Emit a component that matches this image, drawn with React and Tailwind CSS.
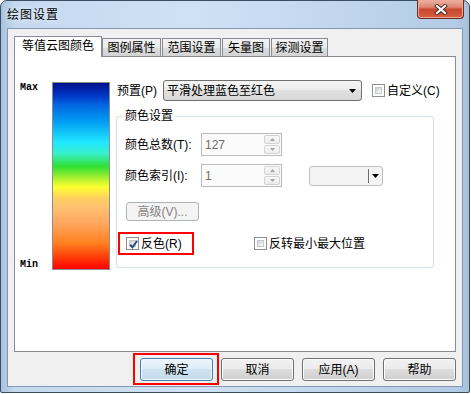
import React from "react";

const FONT = "font-['Liberation_Sans','Noto_Sans_CJK_SC',sans-serif]";
const BTN =
  "flex h-[23px] w-[73px] items-center justify-center rounded-[3px] border border-[#707070] bg-[linear-gradient(#f2f2f2,#ebebeb_50%,#dddddd_50%,#cfcfcf)] shadow-[inset_0_0_0_1px_#fbfbfb] text-[12px] text-black";

function Check({ checked }) {
  return (
    <span className="flex h-[13px] w-[13px] shrink-0 border border-[#8e8f8f] bg-white p-[2px]">
      <span className="relative flex h-full w-full items-center justify-center border border-[#c4c7cc] bg-[linear-gradient(135deg,#c9cdd2,#eef0f2_70%,#fafafa)]">
        {checked ? (
          <svg width="11" height="11" viewBox="0 0 11 11" className="absolute -left-[2px] -top-[2px]">
            <path d="M2.2 5.6 L4.4 8.4 L9.2 1.8" fill="none" stroke="#2c4a80" strokeWidth="1.9" />
          </svg>
        ) : null}
      </span>
    </span>
  );
}

function Spin({ value }) {
  return (
    <div className="flex h-[23px] w-[81px] items-center justify-between border border-[#b9bcbf] bg-[#fbfbfb] pl-[3px] pr-[1px]">
      <span className="text-[12px] text-[#6d6d6d]">{value}</span>
      <div className="flex flex-col gap-[1px]">
        {["up", "down"].map((d) => (
          <span
            key={d}
            className="flex h-[9px] w-[16px] items-center justify-center rounded-[2px] border border-[#d4d4d4] bg-[linear-gradient(#f8f8f8,#ececec)]"
          >
            <svg width="5" height="3" viewBox="0 0 5 3">
              <path d={d === "up" ? "M0 3 L2.5 0 L5 3 Z" : "M0 0 L2.5 3 L5 0 Z"} fill="#a3a3a3" />
            </svg>
          </span>
        ))}
      </div>
    </div>
  );
}

function Arrow() {
  return (
    <svg width="7" height="4" viewBox="0 0 7 4">
      <path d="M0 0 L7 0 L3.5 4 Z" fill="#000" />
    </svg>
  );
}

export default function App() {
  const tabs = [
    { t: "图例属性", w: "w-[59px]" },
    { t: "范围设置", w: "w-[59px]" },
    { t: "矢量图", w: "w-[48px]" },
    { t: "探测设置", w: "w-[57px]" },
  ];

  return (
    <div className={`h-[394px] w-[471px] bg-white ${FONT}`}>
      <div className="flex h-[393px] w-[470px] flex-col rounded-t-[7px] rounded-b-[2px] border border-[#3b4d62] bg-[linear-gradient(90deg,#a9c2de,#c4d8ee_3%,#cfe1f4_40%,#c2d7ee_70%,#b3cbe6_97%,#a7c0dc)]">
        {/* title bar */}
        <div className="flex h-[27px] shrink-0 items-start justify-between pl-[6px] pr-[5px]">
          <span className="self-center text-[12px] leading-[14px] tracking-[1px] text-black [text-shadow:0_0_6px_#ffffff]">
            绘图设置
          </span>
          <button className="-mt-[1px] flex h-[19px] w-[47px] items-center justify-center rounded-b-[4px] border border-t-0 border-[#6b2a20] bg-[linear-gradient(#ecb3a5,#de8470_40%,#c9472c_52%,#d4603f)] shadow-[inset_0_0_0_1px_#f0a898]">
            <svg width="14" height="11" viewBox="0 0 14 11">
              <path d="M3 2 L11 9 M11 2 L3 9" stroke="#4a2a26" strokeWidth="4" strokeLinecap="square" />
              <path d="M3 2 L11 9 M11 2 L3 9" stroke="#ffffff" strokeWidth="2.2" strokeLinecap="square" />
            </svg>
          </button>
        </div>

        {/* client */}
        <div className="flex px-[6px]">
          <div className="flex h-[359px] w-[456px] flex-col border border-[#8397ae] bg-[#f0f0f0] pl-[6px] pr-[6px] pt-[7px]">
            {/* tabs */}
            <div className="relative z-10 flex h-[20px] items-end">
              <div className="-mb-[1px] flex h-[21px] w-[88px] items-center justify-center border border-b-0 border-[#898c95] bg-white pb-[2px] text-[12px] text-black">
                等值云图颜色
              </div>
              {tabs.map((tab, i) => (
                <div
                  key={tab.t}
                  className={`${tab.w} ${i === 0 ? "" : "ml-[1px]"} flex h-[18px] items-center justify-center border border-b-0 border-[#898c95] bg-[linear-gradient(#f2f2f2,#ebebeb_50%,#dddddd_50%,#d4d4d4)] text-[12px] text-black`}
                >
                  {tab.t}
                </div>
              ))}
            </div>

            {/* panel */}
            <div className="flex h-[296px] w-[442px] border border-[#898c95] bg-white">
              {/* color bar */}
              <div className="flex pl-[5px] pt-[25px]">
                <div className="flex h-[188px] w-[32px] flex-col justify-between font-['Liberation_Mono',monospace] text-[10px] font-bold leading-[11px] text-black">
                  <span>Max</span>
                  <span>Min</span>
                </div>
                <div className="h-[188px] w-[58px] border border-[#8d8d8d] bg-[linear-gradient(#00108a,#0038c8_7%,#0068e2_12%,#0098f2_20%,#20e8ff_32%,#38f0c8_38%,#30e030_45%,#a8f030_51%,#ffff30_56%,#ffd060_62%,#ffc070_67%,#ffa860_75%,#ff8020_86%,#ff3a08_94%,#ff0000)]" />
              </div>

              {/* right column */}
              <div className="ml-[6px] flex flex-col pt-[23px]">
                <div className="flex h-[21px] items-center">
                  <span className="w-[47px] pl-[1px] text-[12px] text-black">预置(P)</span>
                  <div className="flex h-[21px] w-[199px] items-center justify-between rounded-[3px] border border-[#707070] bg-[linear-gradient(#f4f4f4,#ececec_50%,#e0e0e0_50%,#d8d8d8)] pl-[3px] pr-[5px] text-[12px] text-black">
                    <span>平滑处理蓝色至红色</span>
                    <Arrow />
                  </div>
                  <div className="ml-[10px] flex items-center gap-[2px]">
                    <Check />
                    <span className="text-[12px] text-black">自定义(C)</span>
                  </div>
                </div>

                <fieldset className="mt-[8px] w-[318px] rounded-[3px] border border-[#d5dfe5] pb-[12px]">
                  <legend className="ml-[5px] px-[3px] text-[12px] leading-[14px] text-black">颜色设置</legend>

                  <div className="mt-[10px] flex h-[23px] items-center">
                    <span className="w-[84px] pl-[8px] text-[12px] text-black">颜色总数(T):</span>
                    <Spin value="127" />
                  </div>

                  <div className="mt-[8px] flex h-[23px] items-center">
                    <span className="w-[84px] pl-[8px] text-[12px] text-black">颜色索引(I):</span>
                    <Spin value="1" />
                    <div className="ml-[27px] flex h-[20px] w-[74px] items-center justify-end rounded-[3px] border border-[#bfbfbf] bg-[#f4f4f4]">
                      <span className="mr-[3px] h-[14px] w-[1px] bg-[#6d6d6d]" />
                      <span className="mr-[3px] flex">
                        <Arrow />
                      </span>
                    </div>
                  </div>

                  <div className="ml-[9px] mt-[15px] flex h-[19px] w-[73px] items-center justify-center rounded-[3px] border border-[#adb2b5] bg-[#f4f4f4] text-[12px] text-[#838383]">
                    高级(V)...
                  </div>

                  <div className="mt-[11px] flex items-center">
                    <div className="ml-[1px] flex h-[23px] w-[76px] items-center gap-[2px] border-2 border-[#ff0000] pl-[6px]">
                      <Check checked />
                      <span className="text-[12px] text-black">反色(R)</span>
                    </div>
                    <div className="ml-[60px] flex items-center gap-[2px]">
                      <Check />
                      <span className="text-[12px] text-black">反转最小最大位置</span>
                    </div>
                  </div>
                </fieldset>
              </div>
            </div>

            {/* buttons */}
            <div className="mt-[6px] flex justify-end gap-[8px]">
              <div className="relative">
                <span className="absolute -left-[7px] -top-[5px] h-[32px] w-[86px] border-2 border-[#ff0000]" />
                <button className="flex h-[23px] w-[73px] items-center justify-center rounded-[3px] border border-[#3c7fb1] bg-[linear-gradient(#eef5fa,#dcebf5_50%,#cde2f0_50%,#c4dcec)] shadow-[inset_0_0_0_1px_#f4f9fc] text-[12px] text-black">
                  确定
                </button>
              </div>
              <button className={BTN}>取消</button>
              <button className={BTN}>应用(A)</button>
              <button className={BTN}>帮助</button>
            </div>
          </div>
        </div>
      </div>
    </div>
  );
}
